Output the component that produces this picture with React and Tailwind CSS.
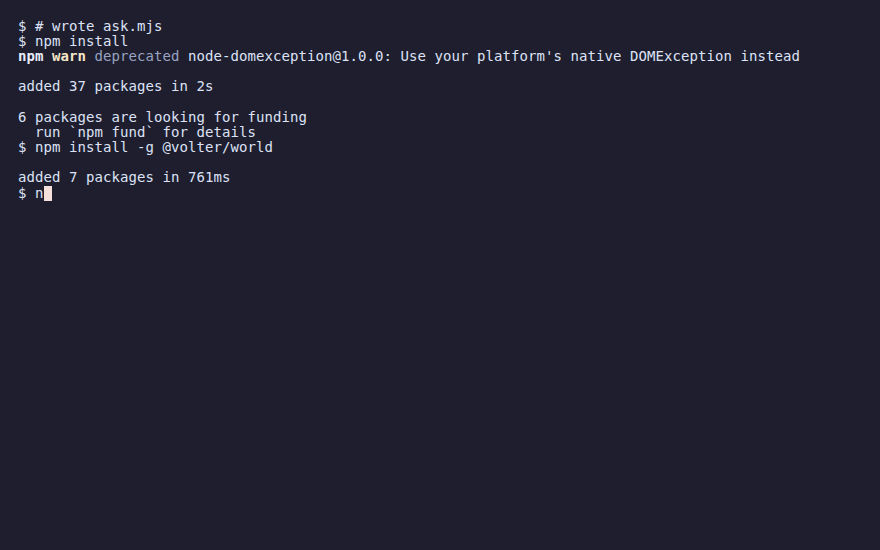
import React from "react";

const lines = [
  [{ t: "$ # wrote ask.mjs" }],
  [{ t: "$ npm install" }],
  [
    { t: "npm", c: "font-bold text-[#e8ecfa]" },
    { t: " " },
    { t: "warn", c: "font-bold text-[#f5e6c8]" },
    { t: " " },
    { t: "deprecated", c: "text-[#9aa3c2]" },
    { t: " node-domexception@1.0.0: Use your platform's native DOMException instead" },
  ],
  [],
  [{ t: "added 37 packages in 2s" }],
  [],
  [{ t: "6 packages are looking for funding" }],
  [{ t: "  run `npm fund` for details" }],
  [{ t: "$ npm install -g @volter/world" }],
  [],
  [{ t: "added 7 packages in 761ms" }],
];

export default function App() {
  return (
    <div className="w-[880px] h-[550px] bg-[#1e1e2e] text-[#dde2f6] font-['DejaVu_Sans_Mono',monospace] text-[14px] tracking-[0.07px] leading-[15.2px] pt-[18.5px] pl-[18px] overflow-hidden">
      {lines.map((line, i) => (
        <div key={i} className="whitespace-pre h-[15.2px]">
          {line.map((s, j) => (
            <span key={j} className={s.c}>
              {s.t}
            </span>
          ))}
        </div>
      ))}
      <div className="whitespace-pre h-[15.2px] flex items-center">
        <span>$ n</span>
        <span className="inline-block w-[8px] h-[15px] bg-[#f5e0dc]"></span>
      </div>
    </div>
  );
}
